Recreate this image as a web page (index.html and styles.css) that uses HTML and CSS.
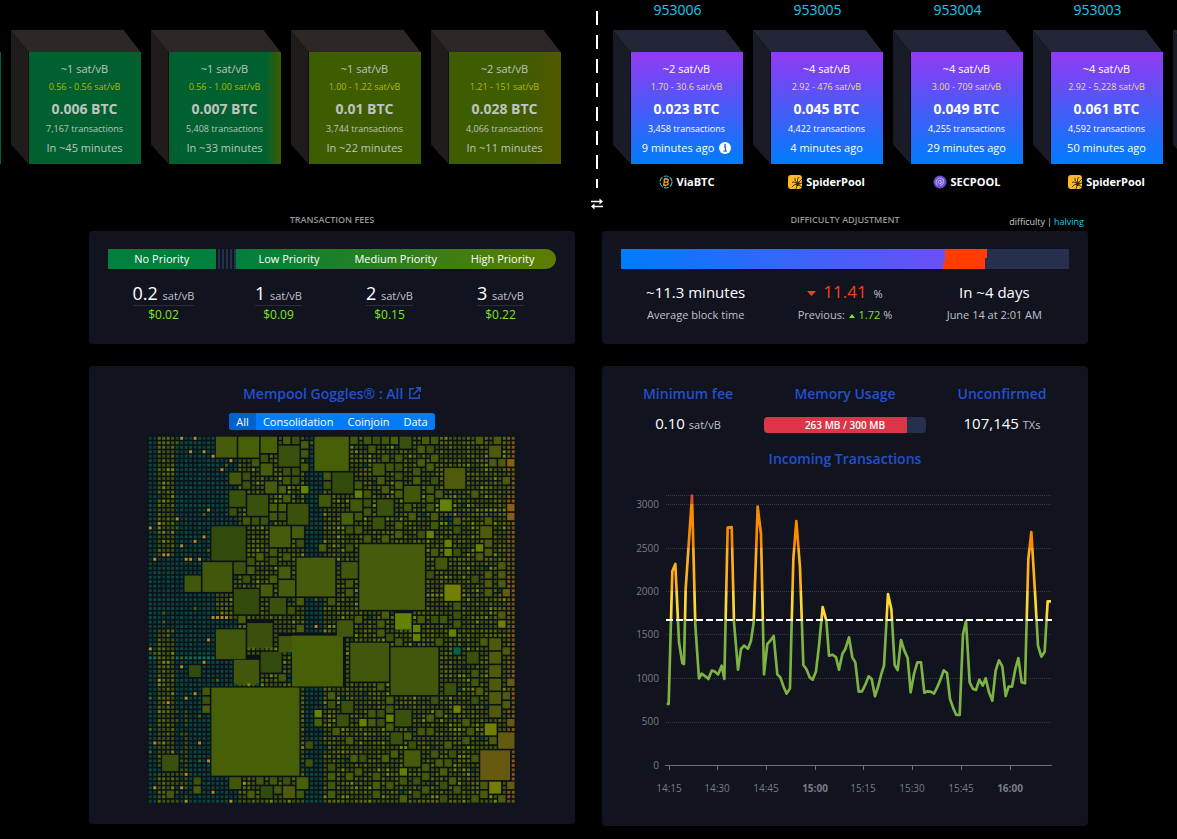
FILE: index.html
```html
<!DOCTYPE html>
<html lang="en">
<head>
<meta charset="utf-8">
<meta name="viewport" content="width=device-width, initial-scale=1">
<title>Mempool dashboard</title>
<link rel="stylesheet" href="styles.css">
</head>
<body>
<svg class="symbols" aria-hidden="true">
  <symbol id="spider" viewBox="0 0 14 14">
    <rect width="14" height="14" rx="3" fill="#fdb827"/>
    <path d="M9.500 8.500 6 7 4 7.500M9 8 7 5 7 3M9.500 8 9.500 4 11 2M10 8 14 4M10 9 14 8M10 9.500 14 12M9 9 6 10 4 12M9.500 9.500 8 14" fill="none" stroke="#3b2a16" stroke-width=".9"/>
    <ellipse cx="9.800" cy="8.800" rx="1.700" ry="2.200" transform="rotate(40 9.800 8.800)" fill="#3b2a16"/>
  </symbol>
</svg>

<header class="strip">
  <section class="side pending" aria-label="Projected blocks">
    <article class="block"><div class="cube"><div class="face green"></div></div></article>
    <article class="block"><div class="cube"><div class="face green"><p class="rate">~1 sat/vB</p><p class="range">0.56 - 0.56 sat/vB</p><p class="total">0.006 BTC</p><p class="count">7,167 transactions</p><p class="when">In ~45 minutes</p></div></div></article>
    <article class="block"><div class="cube"><div class="face green-edge"><p class="rate">~1 sat/vB</p><p class="range">0.56 - 1.00 sat/vB</p><p class="total">0.007 BTC</p><p class="count">5,408 transactions</p><p class="when">In ~33 minutes</p></div></div></article>
    <article class="block"><div class="cube"><div class="face olive"><p class="rate">~1 sat/vB</p><p class="range">1.00 - 1.22 sat/vB</p><p class="total">0.01 BTC</p><p class="count">3,744 transactions</p><p class="when">In ~22 minutes</p></div></div></article>
    <article class="block"><div class="cube"><div class="face olive-edge"><p class="rate">~2 sat/vB</p><p class="range">1.21 - 151 sat/vB</p><p class="total">0.028 BTC</p><p class="count">4,066 transactions</p><p class="when">In ~11 minutes</p></div></div></article>
  </section>
  <div class="divider">
    <span class="dashes"></span>
    <button class="swap" aria-label="Swap sides"><svg viewBox="0 0 12 12" width="12" height="12"><path d="M0 3.500H9M12 8.500H3" stroke="#fff" stroke-width="1.500"/><path d="M8.500.5 12 3.500 8.500 6.500ZM3.500 5.500 0 8.500 3.500 11.500Z" fill="#fff"/></svg></button>
  </div>
  <section class="side mined" aria-label="Mined blocks">
    <article class="block"><a class="height" href="#953006">953006</a><div class="cube"><div class="face"><p class="rate">~2 sat/vB</p><p class="range">1.70 - 30.6 sat/vB</p><p class="total">0.023 BTC</p><p class="count">3,458 transactions</p><p class="when">9 minutes ago <svg viewBox="0 0 12 12" width="12" height="12"><circle cx="6" cy="6" r="6" fill="#fff"/><path d="M5 5H6.500V9M4.500 9.200H7.800" fill="none" stroke="#2268ee" stroke-width="1.300"/><circle cx="6" cy="3" r="1" fill="#2268ee"/></svg></p></div></div>
      <a class="pool" href="#viabtc"><svg viewBox="0 0 14 14" width="14" height="14"><circle cx="7" cy="7" r="6" fill="none" stroke="#4ba9b5" stroke-width="1.200" stroke-dasharray="5 1.280"/><path d="M5.500 3.500 4.800 10.500M4 10.200H7.500C9.800 10 9.800 7.300 7.500 7.200H5.300H7.500C9.900 7 9.800 4 7.800 4H4.800M7 2.800V4M6.300 10.200V11.500" fill="none" stroke="#f5a328" stroke-width="1.300"/></svg>ViaBTC</a></article>
    <article class="block"><a class="height" href="#953005">953005</a><div class="cube"><div class="face"><p class="rate">~4 sat/vB</p><p class="range">2.92 - 476 sat/vB</p><p class="total">0.045 BTC</p><p class="count">4,422 transactions</p><p class="when">4 minutes ago</p></div></div>
      <a class="pool" href="#spiderpool"><svg width="14" height="14"><use href="#spider"/></svg>SpiderPool</a></article>
    <article class="block"><a class="height" href="#953004">953004</a><div class="cube"><div class="face"><p class="rate">~4 sat/vB</p><p class="range">3.00 - 709 sat/vB</p><p class="total">0.049 BTC</p><p class="count">4,255 transactions</p><p class="when">29 minutes ago</p></div></div>
      <a class="pool" href="#secpool"><svg viewBox="0 0 14 14" width="14" height="14"><circle cx="7" cy="7" r="6.500" fill="#6a4fd6"/><path d="M4.500 10.500C2 8 3 4 6.500 3L10.500 4.500 10 9 7 10.800M8.500 5.500 6 5.200 5 7.500 6.500 9 8.500 8V6.800H7" fill="none" stroke="#c9bdf5" stroke-width=".9"/></svg>SECPOOL</a></article>
    <article class="block"><a class="height" href="#953003">953003</a><div class="cube"><div class="face"><p class="rate">~4 sat/vB</p><p class="range">2.92 - 5,228 sat/vB</p><p class="total">0.061 BTC</p><p class="count">4,592 transactions</p><p class="when">50 minutes ago</p></div></div>
      <a class="pool" href="#spiderpool"><svg width="14" height="14"><use href="#spider"/></svg>SpiderPool</a></article>
    <article class="block"><span class="height"></span><div class="cube"><div class="face"></div></div></article>
  </section>
</header>

<main class="dashboard">
  <section class="column">
    <div class="caption"><h2>TRANSACTION FEES</h2></div>
    <div class="card summary">
      <div class="fee-bar"><span class="none">No Priority</span><span class="stripes"></span><div class="levels"><span>Low Priority</span><span>Medium Priority</span><span>High Priority</span></div></div>
      <div class="fees">
        <div class="fee"><p class="amount">0.2 <small>sat/vB</small></p><p class="usd">$0.02</p></div>
        <div class="fee"><p class="amount">1 <small>sat/vB</small></p><p class="usd">$0.09</p></div>
        <div class="fee"><p class="amount">2 <small>sat/vB</small></p><p class="usd">$0.15</p></div>
        <div class="fee"><p class="amount">3 <small>sat/vB</small></p><p class="usd">$0.22</p></div>
      </div>
    </div>
    <div class="card goggles">
      <a class="title" href="#goggles">Mempool Goggles® : All <svg viewBox="0 0 12 12" width="12" height="12"><path d="M5 1.800H.8V11.200H10.200V7M4.500 7.500 11 1M7 .8H11.200V5" fill="none" stroke="currentColor" stroke-width="1.500"/></svg></a>
      <div class="filters"><button class="active">All</button><button>Consolidation</button><button>Coinjoin</button><button>Data</button></div>
      <svg class="treemap" id="treemap" viewBox="0 0 82 82" role="img" aria-label="Mempool transactions"></svg>
    </div>
  </section>

  <section class="column">
    <div class="caption"><h2>DIFFICULTY ADJUSTMENT</h2><div class="toggle">difficulty<i>|</i><a href="#halving">halving</a></div></div>
    <div class="card summary">
      <svg class="epoch" viewBox="0 0 448 20" preserveAspectRatio="none" role="img" aria-label="Difficulty epoch progress">
        <defs><linearGradient id="epochFill"><stop stop-color="#007cfa"/><stop offset="1" stop-color="#6a50f5"/></linearGradient></defs>
        <path d="M0 0H448V20H0Z" fill="#272f4e"/><path d="M0 0H324V20H0Z" fill="url(#epochFill)"/><path d="M324 0H366V9H364V20H322V13H324Z" fill="#ff3d00"/>
      </svg>
      <div class="stats">
        <div><p class="big">~11.3 minutes</p><p class="sub">Average block time</p></div>
        <div><p class="big down"><svg viewBox="0 0 9 5" width="9" height="5"><path d="M0 0H9L4.500 5Z" fill="currentColor"/></svg> <span>11.41</span> <small>%</small></p><p class="sub">Previous: <svg class="up" viewBox="0 0 6 4" width="6" height="4"><path d="M0 4H6L3 0Z" fill="currentColor"/></svg> <span class="up">1.72</span> %</p></div>
        <div><p class="big">In ~4 days</p><p class="sub">June 14 at 2:01 AM</p></div>
      </div>
    </div>
    <div class="card flow">
      <div class="metrics">
        <div><h3 class="title">Minimum fee</h3><p class="metric">0.10 <small>sat/vB</small></p></div>
        <div><h3 class="title">Memory Usage</h3><div class="memory"><span style="width:88%"></span><b>263 MB / 300 MB</b></div></div>
        <div><h3 class="title">Unconfirmed</h3><p class="metric">107,145 <small>TXs</small></p></div>
      </div>
      <h3 class="title incoming">Incoming Transactions</h3>
      <svg class="chart" viewBox="621 480 448 326" role="img" aria-label="Incoming transactions per second">
        <defs><linearGradient id="load" gradientUnits="userSpaceOnUse" x1="0" y1="408" x2="0" y2="1220">
          <stop offset="0" stop-color="#e64a2e"/><stop offset=".034" stop-color="#e64a2e"/><stop offset=".034" stop-color="#fb8c00"/><stop offset=".197" stop-color="#fb8c00"/><stop offset=".197" stop-color="#ffb01a"/><stop offset=".355" stop-color="#ffb01a"/><stop offset=".355" stop-color="#fdd835"/><stop offset=".462" stop-color="#fdd835"/><stop offset=".462" stop-color="#7cb342"/><stop offset="1" stop-color="#7cb342"/>
        </linearGradient></defs>
        <path class="gridline" d="M666 496.500H1052M666 505.500H1052M666 549.500H1052M666 592.500H1052M666 635.500H1052M666 679.500H1052M666 723.500H1052"/>
        <path class="axis" d="M665 766.500H1052M669.500 767V771M717.500 767V771M766.500 767V771M815.500 767V771M863.500 767V771M912.500 767V771M961.500 767V771M1010.500 767V771"/>
        <g class="labels end"><text x="659" y="509">3000</text><text x="659" y="553">2500</text><text x="659" y="596">2000</text><text x="659" y="639">1500</text><text x="659" y="683">1000</text><text x="659" y="726">500</text><text x="659" y="770">0</text></g>
        <g class="labels"><text x="669" y="793">14:15</text><text x="717" y="793">14:30</text><text x="766" y="793">14:45</text><text class="hour" x="815" y="793">15:00</text><text x="863" y="793">15:15</text><text x="912" y="793">15:30</text><text x="961" y="793">15:45</text><text class="hour" x="1010" y="793">16:00</text></g>
        <g transform="translate(600 360) scale(.333333)"><polyline class="series" stroke="url(#load)" points="200,1035 206,1035 217,637 226,615 237,850 247,912 252,915 257,690 270,500 276,410 286,800 297,958 305,944 316,952 325,960 335,935 344,937 354,947 365,920 373,960 383,506 395,504 402,790 414,932 423,870 432,860 444,869 453,845 461,790 473,443 483,525 492,946 502,855 511,845 521,831 532,946 541,955 551,984 560,1004 570,988 580,600 589,486 600,625 610,918 619,930 629,955 638,962 648,937 657,860 668,744 679,785 687,890 698,887 708,895 717,932 727,885 736,870 747,835 757,895 766,910 776,998 786,997 796,977 806,952 815,960 825,1012 834,984 844,945 852,920 864,705 874,750 884,918 893,933 903,843 913,875 923,897 932,1000 942,945 952,910 963,910 973,1001 983,997 992,998 1002,1004 1012,984 1022,960 1031,934 1041,942 1050,1020 1060,1048 1069,1068 1079,1068 1089,825 1098,787 1109,970 1119,990 1128,993 1138,962 1148,980 1157,958 1167,1000 1177,1025 1187,935 1197,904 1207,922 1217,1011 1226,983 1236,983 1246,930 1255,897 1265,970 1275,973 1285,600 1294,519 1305,700 1314,860 1324,893 1334,878 1343,727 1353,727"/></g>
        <path class="limit" d="M666 621H1052"/>
      </svg>
    </div>
  </section>
</main>
<script src="treemap.js"></script>
</body>
</html>
```
FILE: styles.css
```css
* { box-sizing: border-box; }
body {
  margin: 0;
  background: #000;
  color: #fff;
  font-family: "Open Sans", "Noto Sans", sans-serif;
  font-size: 12px;
  line-height: 20px;
  overflow-x: hidden;
}
p, h2, h3 { margin: 0; }
a { color: inherit; text-decoration: none; }
button { border: 0; padding: 0; background: none; color: inherit; font: inherit; cursor: pointer; }
.symbols { display: none; }

.strip { display: flex; height: 210px; overflow: hidden; }
.side { display: flex; gap: 10px; min-width: 0; }
.pending { flex: none; width: calc(50% + 2px); padding: 30px 30px 0 0; justify-content: flex-end; }
.mined { flex: 1; padding-left: 10px; }
.block { flex: none; width: 130px; display: flex; flex-direction: column; }
.height { height: 30px; text-align: center; font-size: 14px; color: #1fc8f0; }
.cube { display: grid; grid-template: 22px 112px / 18px 112px; }
.cube::before { content: ""; grid-area: 1 / 1 / 2 / 3; background: #232636; clip-path: polygon(0 0, 113px 0, 100% 100%, 18px 100%); }
.cube::after { content: ""; grid-area: 1 / 1 / 3 / 2; background: #191b26; clip-path: polygon(0 0, 100% 22px, 100% 100%, 0 114px); }
.pending .cube::before { background: #2d2826; }
.pending .cube::after { background: #201c1b; }
.face { grid-area: 2 / 2; display: flex; flex-direction: column; padding-top: 8px; text-align: center; white-space: nowrap; background: linear-gradient(#9339f4, #007cfa); }
.pending .face { color: #bfc4bf; }
.pending .green { background: #00602f; }
.pending .green-edge { background: linear-gradient(to right, #00602f 86%, #3e5c00); }
.pending .olive { background: #3e5c00; }
.pending .olive-edge { background: linear-gradient(to right, #3e5c00 60%, #505900); }
.rate { font-size: 11px; line-height: 18px; }
.range { font-size: 9px; line-height: 18px; color: #f2dc7a; }
.pending .range { color: #b4b800; }
.total { font-size: 14px; line-height: 26px; font-weight: 700; }
.count { font-size: 9px; line-height: 14px; }
.when { font-size: 11px; line-height: 24px; display: flex; justify-content: center; align-items: center; gap: 5px; }
.pool { height: 20px; margin-top: 8px; padding-left: 18px; display: flex; align-items: center; justify-content: center; gap: 4px; font-size: 11px; font-weight: 700; }
.divider { flex: none; width: 12px; display: flex; flex-direction: column; align-items: center; padding-top: 11px; }
.dashes { width: 2px; height: 177px; background: repeating-linear-gradient(#fff 0 14px, transparent 14px 24px); }
.swap { margin-top: 10px; height: 12px; display: flex; }

.dashboard { max-width: 1031px; margin: 0 auto; padding: 0 16px; display: grid; grid-template-columns: 1fr 1fr; gap: 27px; }
.column { min-width: 0; }
.caption { display: grid; grid-template-columns: 1fr auto 1fr; height: 21px; }
.caption h2 { grid-column: 2; font-size: 9px; font-weight: 600; color: #96969a; }
.toggle { justify-self: end; padding: 2px 4px 0 0; font-size: 9px; color: #c9c9cc; }
.toggle i { font-style: normal; margin: 0 2px; }
.toggle a { color: #1fc8f0; }
.card { background: #11131f; border-radius: 4px; }
.summary { height: 113px; padding: 18px 19px; margin-bottom: 22px; }

.fee-bar { display: flex; height: 20px; font-size: 11px; text-align: center; }
.none { width: 24%; background: #00803c; }
.stripes { width: 20px; background: repeating-linear-gradient(to right, #11131f 0 2px, #272f4e 2px 4px); }
.levels { flex: 1; display: grid; grid-template-columns: repeat(3, 1fr); border-radius: 0 10px 10px 0; background: linear-gradient(to right, #00803c, #5d7d00); }
.fees { display: grid; grid-template-columns: 115px repeat(3, 1fr); padding-top: 12px; }
.fee { display: flex; flex-direction: column; align-items: center; }
.fee:first-child { padding-right: 4px; }
.amount { font-size: 18px; line-height: 24px; height: 25px; border-bottom: 1px solid #2a2c38; }
small { font-size: 11px; color: #c0c1c8; }
.usd { line-height: 18px; color: #7bea1c; }

.epoch { display: block; width: 100%; height: 20px; }
.stats { display: grid; grid-template-columns: repeat(3, 1fr); text-align: center; padding-top: 11px; white-space: nowrap; }
.big { font-size: 15px; line-height: 24px; height: 24px; }
.down { color: #ff3d1a; }
.down span { font-size: 17px; margin: 0 3px; }
.down svg { vertical-align: 2px; }
.sub { font-size: 11px; line-height: 22px; color: #c0c1c8; }
.sub svg { vertical-align: 1px; margin: 0 1px; }
.up { color: #7bea1c; }

.goggles { display: flex; flex-direction: column; align-items: center; padding: 18px 40px 21px; }
.title { color: #2450cc; font-size: 14px; line-height: 20px; font-weight: 600; }
.goggles .title svg { margin-left: 2px; }
.filters { display: flex; margin: 9px 0 6px; border-radius: 3px; overflow: hidden; background: #007cfa; font-size: 11px; line-height: 17px; }
.filters button { padding: 0 7px; }
.filters .active { background: #0062c4; }
.treemap { display: block; width: 90.5%; aspect-ratio: 1; background: #0b1115; }

.flow { padding: 18px 19px 21px; }
.metrics { display: grid; grid-template-columns: 134px 1fr 134px; text-align: center; }
.metric { font-size: 15px; line-height: 20px; padding-top: 9px; font-weight: 500; }
.memory { display: grid; width: 90%; height: 16px; margin: 13px auto 0; border-radius: 4px; overflow: hidden; background: #272f4e; font-size: 10px; line-height: 16px; }
.memory span { grid-area: 1 / 1; background: #dc3547; }
.memory b { grid-area: 1 / 1; font-weight: 600; }
.incoming { text-align: center; padding-top: 14px; }
.chart { display: block; width: 100%; margin-top: 10px; }
.gridline { fill: none; stroke: #363844; stroke-dasharray: 1 1; }
.axis { fill: none; stroke: #6e7079; }
.labels { font-size: 10px; fill: #7a7c85; text-anchor: middle; }
.end { text-anchor: end; }
.hour { font-weight: 700; }
.series { fill: none; stroke-width: 8; stroke-linejoin: round; }
.limit { stroke: #fff; stroke-width: 2; stroke-dasharray: 7 3; }

@media (max-width: 800px) {
  .dashboard { grid-template-columns: 1fr; }
}
```
FILE: treemap.js
```js
// Each entry: column, row, side length in cells, optional tint.
const squares = `
15,0,5 20,0,5,m 25,0,4,m 30,0,2 32,0,2 34,1,2 29,2,5 25,4,2 23,5,2 34,3,2 37,0,8,m 25,6,3 34,6,2 18,8,3 21,8,2 30,7,2
32,7,2 30,9,2 32,9,2 34,11,2,b 21,10,2 26,10,3 29,11,2 18,12,4 22,13,5 30,13,2 27,15,2 29,15,2 27,17,2 29,17,2 31,15,5
18,16,2 21,18,2 23,18,2 25,18,2 14,20,8,d 27,20,5 32,20,3 33,23,2 24,26,2,m 22,27,2 27,25,2 27,27,2 30,26,2 12,28,7 19,28,3
22,29,2 21,31,2 8,31,4 29,29,3 27,31,2 33,27,9 19,34,6,d 25,33,3 29,32,4 27,36,4 31,38,2 33,36,2 39,8,2 39,10,2 38,13,3
38,24,2 41,8,5,d 40,36,2 33,42,2 20,40,2 15,43,7 22,41.6,6 19,49.8,6 25,48,5,d 29,44.5,4 32,44.4,11.700,m 9,51,3,d 12,56,2
12,58,2 12,60,2 14,56,20,m 40,57,2 40,59,2 37,61,2,b 37,63,2,m 35,68,2 35,72,2 41,65,2 3,71,4 10,76,2 10,78,2 4,79,2
18,76,3 24,76,2 27,76,2 30,76,2 33,76,3,m 22,79,2 25,78,3,d 28,78,2 30,78,3,y 33,79,2 40,73,2 40,75,2 40,77,2 40,79,2
29,53,2 42,41,4 45,0,2 48,0,2 50,0,2 52,0,2 54,0,2,m 56,0,3 61,0,2 63,0,2 73,0,2 77,0,2 49,2,2 60,2,2 62,2,2 52,4,2
55,4,2 63,4,2 76,2,3 76,5,2 78,5,2 80,5,2,o 50,6,3 53,6,2 55,6,2 60,5,2 62,6,2 55,8,2 55,10,2,m 55,12,2 59,7,2 59,9,2
63,9,2 66,7,5,y 79,9,2 51,9,2 52,11,2 46,10,2 46,12,2,b 48,12,2 48,14,2 48,16,2 57,11,4 62,11,2 62,13,2 64,12,2 62,15,2
72,12,2 45,14,3 51,14,4 65,14,3,b 57,15,2 58,17,2 80,15,2,o 80,17,2,o 43,17,3,m 46,17,2 44,20,2 46,20,2 50,18,3 55,19,2
55,21,2 63,17,2 63,19,2 68,18,2 68,20,2 75,18,2 74,20,3,y 48,22,2 52,22,2 60,21,2 62,21,2,b 66,23,2,b 66,25,2,b 68,25,2
73,24,2,b 73,26,2 75,23,2 75,25,2 47,24,15 44,24,2 43,28,4 44,32,2 44,34,2 63,25,2 64,27,3 62,30,2 66,33,4,l 72,31,2
75,30,2 75,32,2 75,34,2 78,28,2 78,30,2 78,32,2 79,34,2,w 52,39,2 55,39.4,4,b 59,42,2,b 59,44,2,b 46,40,2 51,41,2 51,43,2
53,44,2 55,45,2 60,40,2 63,40,2 65,40,2 68,37,2 68,39,2 68,41,2 67,43,2,b 64,45,2 78,39,2 78,41,2,l 74,45,2 76,45,3,y
76,48,3,y 76,51,3,y 76,54,3,y 76,57,3,y 76,60,3,y 79,47,2 68,47,2,t 71,48,3 72,52,2 72,54,2 73,56,2 45,46,9 54,47,11
51,55,2 66,55,3 80,54,2,w 79,57,2 79,59,2 53,58,2 53,60,2 53,62,2,b 53,64,2 63,58,2 72,58,2 43,59,3 68,60,2,l 55,61,4
42,62,3 49,61,2 51,61,2 47,63,2,b 49,63,2 51,63,2 64,61,2 62,62,2 70,63,2 80,63,2,w 75,64,3,l 78,66,4,w 54,66,3 57,66,2
60,65,2 62,65,2 71,65,2 44,67,2 58,68,2 66,68,2 70,67,2 76,67,2 74,70,7,w 45,71,2 47,71,2 52,71,2,m 54,70,2 57,70,4
63,70,2 67,70,2 64,72,2 66,72,2 72,71,2 61,73,2 46,74,2 56,74,2,b 65,74,2 44,75,2 50,75,2 50,77,2 59,76,2 61,75,2
67,76,2 53,77,2 56,76,2 61,78,2 65,77,2 68,78,2 76,77,3,l 80,77,2,w 74,77,2 74,79,2 72,80,2 78,80,2 59,79,2 56,80,2,m
65,80,2 50,79,2`.trim().split(/\s+/).map(s => s.split(","));

const sparks = `7,0 10,0 9,3 12,3 14,4 18,5 16,7 13,16 6,18 2,19 0,20 12,22 10,23 7,24 3,26 4,26 8,27 9,27 11,27 1,27 14,40 15,40
16,40 17,40 13,45 0,47 7,51 12,50 2,54 10,57 8,58 4,59 11,68 13,72 8,75 1,68 1,78 7,78 14,79 21,77 18,81 8,81 37,42 21,50`
  .trim().split(/\s+/);

const tints = { d: "#334a0d", m: "#476008", b: "#638300", l: "#737e05", y: "#515a0b", w: "#665a12", o: "#8a5c16", t: "#04614c" };
const olive = ["#3a500d", "#41570b", "#465b0b"];
const noise = (x, y) => { const v = Math.sin(x * 127.1 + y * 311.7) * 43758.5453; return v - Math.floor(v); };

const taken = new Set();
const shapes = [];
for (const [a, b, c, tint] of squares) {
  const x = +a, y = +b, n = +c;
  for (let i = 0; i < n; i++) for (let j = 0; j < n; j++) taken.add(Math.floor(x + i) + "," + Math.floor(y + j));
  const fill = tints[tint] || (x > 72 ? "#4e5a0b" : olive[Math.floor(noise(x, y) * 3)]);
  shapes.push(`<rect x="${x + .15}" y="${y + .15}" width="${n - .35}" height="${n - .35}" fill="${fill}"/>`);
}

function cellColor(x, y) {
  const r = noise(x, y);
  if (sparks.includes(x + "," + y)) return "#b98d24";
  if (x > 79) return r > .6 ? "#8a5518" : "#645812";
  const tealBand = x < 15 || (x < 20 && (y < 20 || y > 40)) || (x > 34 && x < 39 && y !== 45);
  const oliveBand = x > 1 && x < 6 && !(y > 26 && y < 43);
  if (y > 60 && x > 5 && x < 9 && r > .5) return "#3f5210";
  if (tealBand && !oliveBand) return r > .97 ? "#4a600d" : y === 49 ? "#08705a" : r > .5 ? "#09493f" : "#0a3d3f";
  if (r > .93) return "#73880a";
  if (r > .6) return "#59680c";
  return r < .02 ? "#094540" : "#40520f";
}

for (let y = 0; y < 82; y++) for (let x = 0; x < 82; x++) {
  if (taken.has(x + "," + y)) continue;
  shapes.push(`<rect x="${x + .18}" y="${y + .18}" width=".66" height=".66" fill="${cellColor(x, y)}"/>`);
}
document.getElementById("treemap").innerHTML = shapes.join("");
```
